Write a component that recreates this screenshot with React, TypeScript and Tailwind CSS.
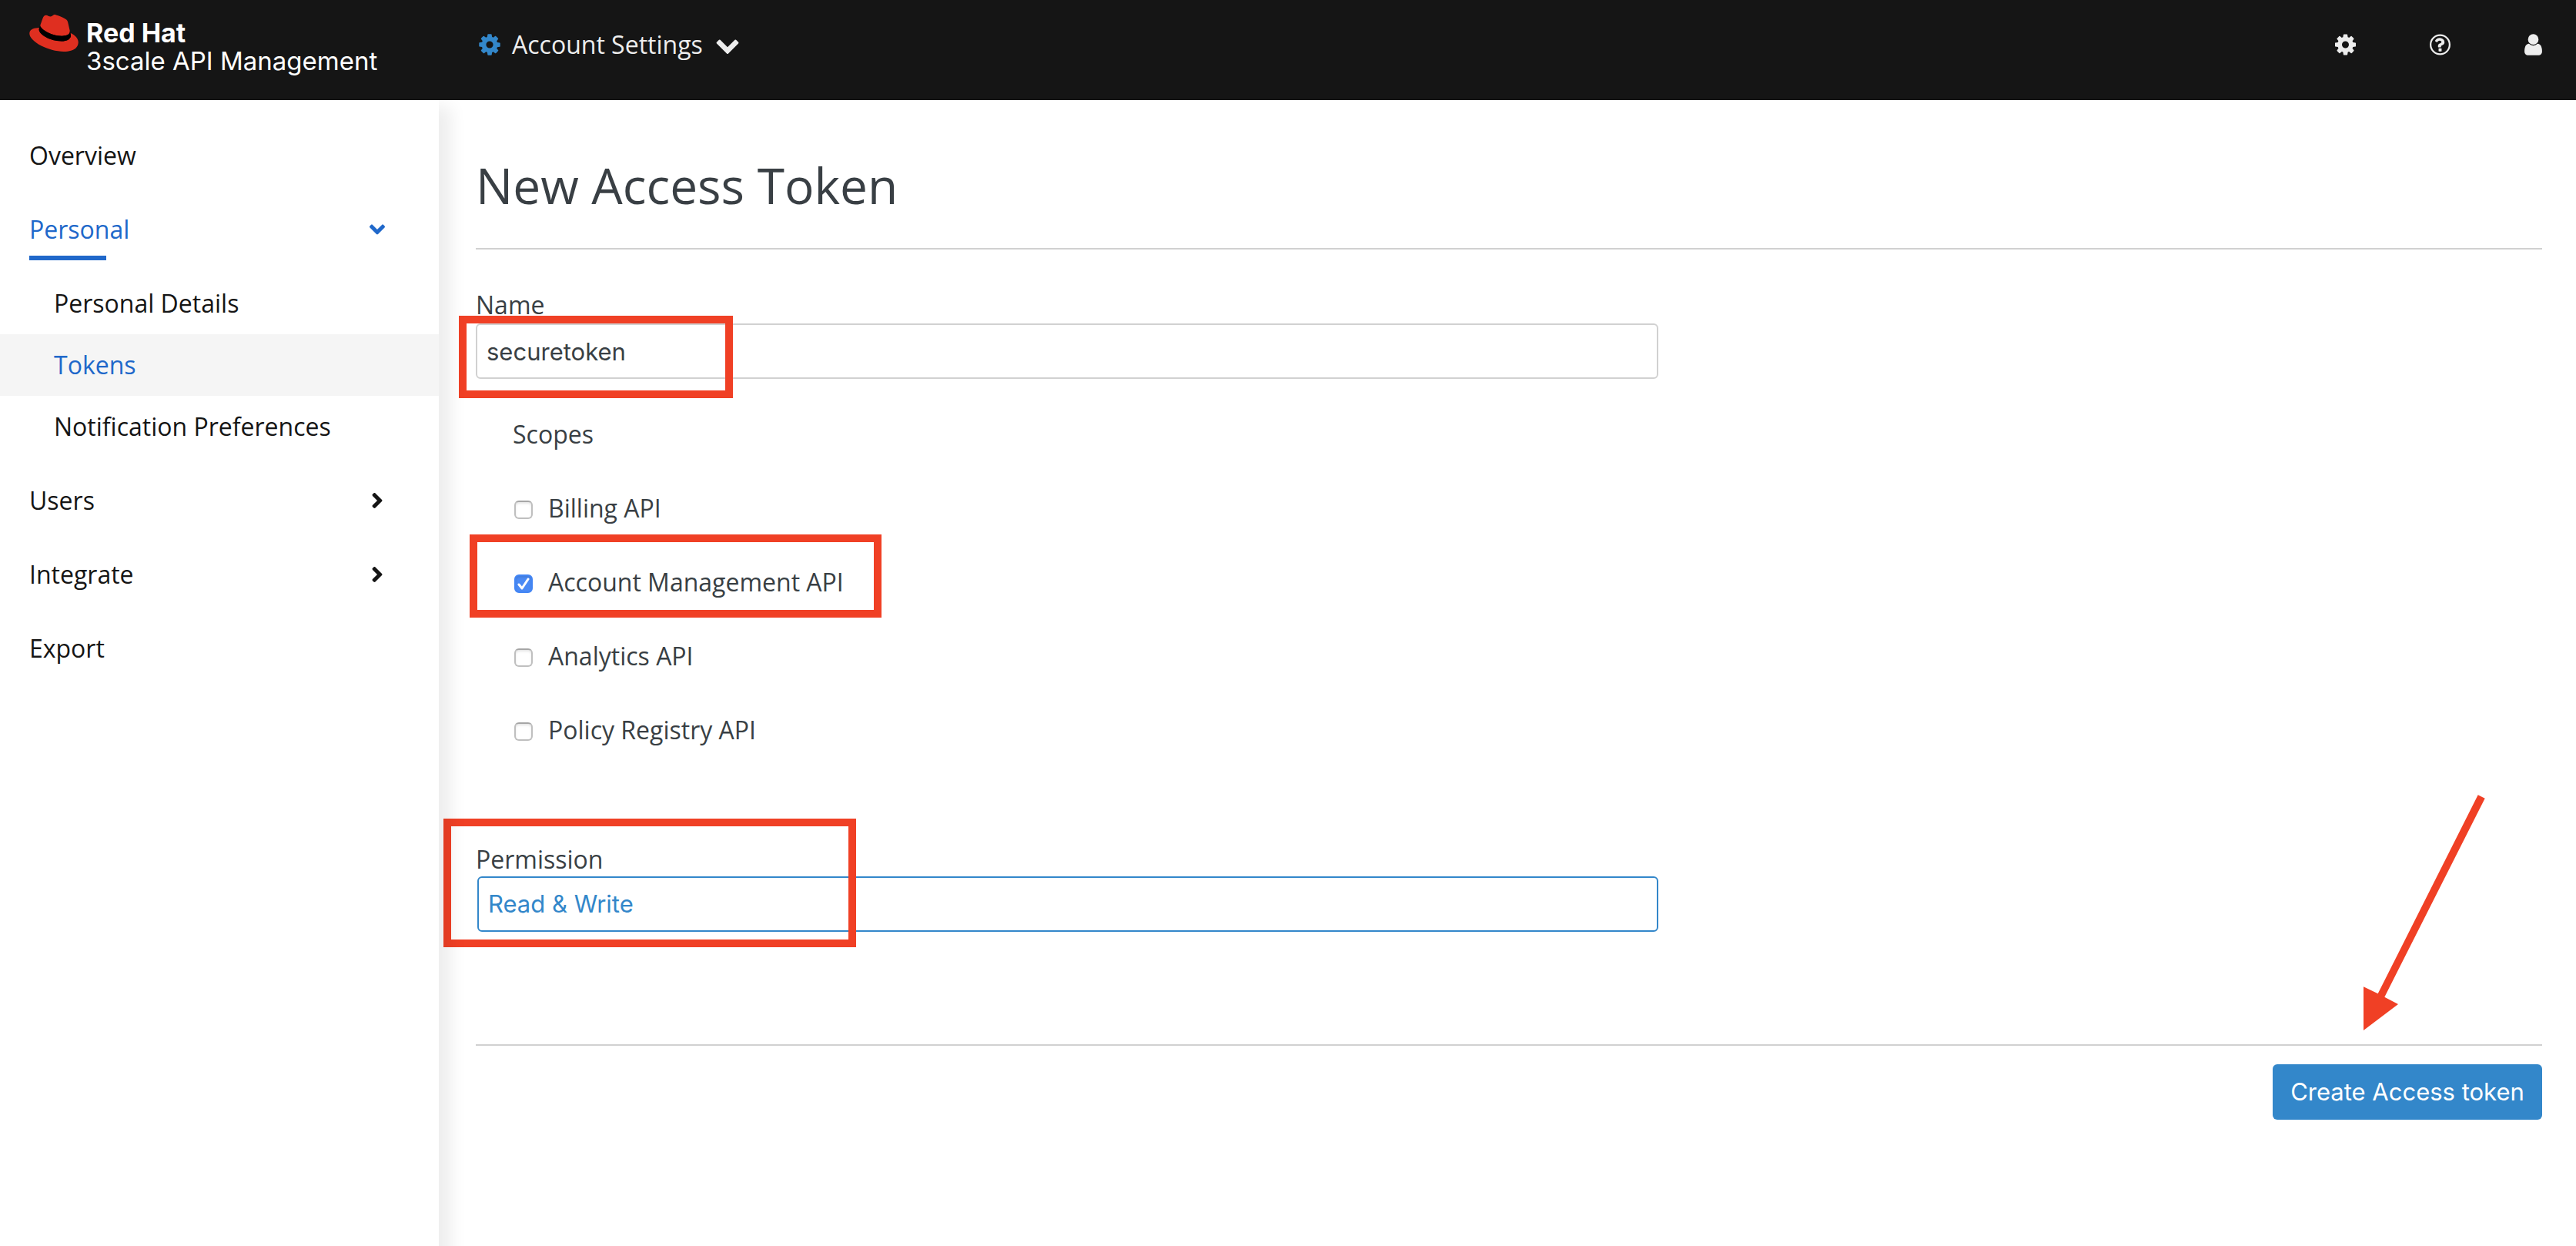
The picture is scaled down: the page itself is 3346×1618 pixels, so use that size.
import { useState } from "react";
import type { ReactNode } from "react";
import { FaAngleDown, FaAngleRight } from "react-icons/fa";

const GEAR =
  "M1152 896q0-106-75-181t-181-75-181 75-75 181 75 181 181 75 181-75 75-181zm512-109v222q0 12-8 23t-20 13l-185 28q-19 54-39 91 35 50 107 138 10 12 10 25t-9 23q-27 37-99 108t-94 71q-12 0-26-9l-138-108q-44 23-91 38-16 136-29 186-7 28-36 28h-222q-14 0-24.5-8.5t-11.5-21.5l-28-184q-49-16-90-37l-141 107q-10 9-25 9-14 0-25-11-126-114-165-168-7-10-7-23 0-12 8-23 15-21 51-66.5t54-70.5q-27-50-41-99l-183-27q-13-2-21-12.5t-8-23.5v-222q0-12 8-23t19-13l186-28q14-46 39-92-40-57-107-138-10-12-10-24 0-10 9-23 26-36 98.5-107.5t94.5-71.5q13 0 26 10l138 107q44-23 91-38 16-136 29-186 7-28 36-28h222q14 0 24.5 8.5t11.5 21.5l28 184q49 16 90 37l142-107q9-9 24-9 13 0 25 10 129 119 165 170 7 8 7 22 0 12-8 23-15 21-51 66.5t-54 70.5q26 50 41 98l183 28q13 2 21 12.5t8 23.5z";
const CHEVRON =
  "M1683 808l-742 741q-19 19-45 19t-45-19l-742-741q-19-19-19-45.5t19-45.5l166-165q19-19 45-19t45 19l531 531 531-531q19-19 45-19t45 19l166 165q19 19 19 45.5t-19 45.5z";
const QUESTION =
  "M1008 1200v160q0 14-9 23t-23 9h-160q-14 0-23-9t-9-23v-160q0-14 9-23t23-9h160q14 0 23 9t9 23zm213-496q0 50-15 90t-45.5 69-52 44-59.5 36q-32 18-46.5 28t-26 24-11.5 29v32q0 14-9 23t-23 9h-160q-14 0-23-9t-9-23v-68q0-35 10.5-64.5t24-47.5 39-35.5 41-25.5 44.5-21q53-25 75-43t22-49q0-42-43.5-71.5t-95.5-29.5q-56 0-95 27-29 20-80 83-9 12-25 12-11 0-19-6l-108-82q-10-7-12-20t5-23q122-192 349-192 129 0 238.5 89.5t109.5 214.5z";
const USER =
  "M1536 1399q0 109-62.5 187t-150.5 78h-854q-88 0-150.5-78t-62.5-187q0-85 8.5-160.5t31.5-152 58.5-131 94-89 134.5-34.5q131 128 313 128t313-128q76 0 134.5 34.5t94 89 58.5 131 31.5 152 8.5 160.5zm-256-887q0 159-112.5 271.5t-271.5 112.5-271.5-112.5-112.5-271.5 112.5-271.5 271.5-112.5 271.5 112.5 112.5 271.5z";

function Hat() {
  return (
    <svg viewBox="0.5 0.5 190.4 144" className="h-12 w-16 shrink-0" aria-hidden="true">
      <path
        fill="#df2f20"
        d="M127.47,83.49c12.51,0,30.61-2.58,30.61-17.46a14,14,0,0,0-.31-3.42l-7.45-32.36c-1.72-7.12-3.23-10.35-15.73-16.6C124.89,8.69,103.76.5,97.51.5,91.69.5,90,8,83.06,8c-6.68,0-11.64-5.6-17.89-5.6-6,0-9.91,4.09-12.93,12.5,0,0-8.41,23.72-9.49,27.16A6.43,6.43,0,0,0,42.53,44c0,9.22,36.3,39.45,84.94,39.45M160,72.07c1.73,8.19,1.73,9.05,1.73,10.13,0,14-15.74,21.77-36.43,21.77C78.54,104,37.58,76.6,37.58,58.49a18.45,18.45,0,0,1,1.51-7.33C22.27,52,.5,55,.5,74.22c0,31.48,74.59,70.28,133.65,70.28,45.28,0,56.7-20.48,56.7-36.65,0-12.72-11-27.16-30.83-35.78"
      />
      <path
        fill="#000"
        d="M160,72.07c1.73,8.19,1.73,9.05,1.73,10.13,0,14-15.74,21.77-36.43,21.77C78.54,104,37.58,76.6,37.58,58.49a18.45,18.45,0,0,1,1.51-7.33l3.66-9.06A6.43,6.43,0,0,0,42.53,44c0,9.22,36.3,39.45,84.94,39.45,12.51,0,30.61-2.58,30.61-17.46a14,14,0,0,0-.31-3.42Z"
      />
    </svg>
  );
}

function Header() {
  return (
    <header className="relative z-20 flex h-[130px] items-start bg-[#151515] text-[#ededed]">
      <a href="#home" className="flex w-[620px] shrink-0 items-start gap-[10px] pt-[19px] pl-[38px] text-white">
        <Hat />
        <span className="flex flex-col pt-[6px] font-['Inter',sans-serif] leading-9 whitespace-nowrap">
          <span className="text-[34px] font-bold">Red Hat</span>
          <span className="text-[33px]">3scale API Management</span>
        </span>
      </a>
      <button type="button" className="flex items-center gap-[13px] pt-[34px] leading-12 whitespace-nowrap">
        <svg viewBox="0 0 1792 1792" className="size-8 fill-[#3387ca]" aria-hidden="true">
          <path d={GEAR} />
        </svg>
        Account Settings
        <svg viewBox="0 0 1792 1792" className="ml-[3px] size-8 fill-current" aria-hidden="true">
          <path d={CHEVRON} />
        </svg>
      </button>
      <div className="ml-auto flex gap-24 pt-[42px] pr-[44px]">
        <button type="button" aria-label="Settings">
          <svg viewBox="128 0 1536 1792" className="h-8 w-[27px] fill-current">
            <path d={GEAR} />
          </svg>
        </button>
        <button type="button" aria-label="Help">
          <svg viewBox="128 0 1536 1792" className="h-8 w-[27px] fill-current">
            <circle cx="896" cy="896" r="704" fill="none" stroke="currentColor" strokeWidth="128" />
            <path d={QUESTION} />
          </svg>
        </button>
        <button type="button" aria-label="Account">
          <svg viewBox="256 0 1280 1792" className="h-8 w-[23px] fill-current">
            <path d={USER} />
          </svg>
        </button>
      </div>
    </header>
  );
}

function NavLink({ children, icon }: { children: ReactNode; icon?: ReactNode }) {
  return (
    <a href="#section" className="flex h-24 items-center justify-between pr-16 pl-[38px]">
      {children}
      {icon && <span className="flex w-8 justify-center">{icon}</span>}
    </a>
  );
}

function SubLink({ children, current }: { children: ReactNode; current?: boolean }) {
  return (
    <a
      href="#subsection"
      aria-current={current ? "page" : undefined}
      className={
        current
          ? "flex h-20 items-center bg-[#f5f5f5] pl-[70px] text-[#2068ca]"
          : "flex h-20 items-center pl-[70px]"
      }
    >
      {children}
    </a>
  );
}

function Sidebar() {
  return (
    <nav className="relative z-10 -mb-8 w-[570px] shrink-0 bg-white pt-6 text-[#151515] shadow-[24px_0_20px_-8px_rgba(3,3,3,0.07)]">
      <NavLink>Overview</NavLink>
      <button
        type="button"
        aria-expanded="true"
        className="relative flex h-24 w-full items-center justify-between pr-16 pl-[38px] text-[#2068ca]"
      >
        Personal
        <span className="flex w-8 justify-center">
          <FaAngleDown />
        </span>
        <span className="absolute bottom-2 left-[38px] h-1.5 w-[100px] bg-[#2068ca]" />
      </button>
      <div className="py-2">
        <SubLink>Personal Details</SubLink>
        <SubLink current>Tokens</SubLink>
        <SubLink>Notification Preferences</SubLink>
      </div>
      <NavLink icon={<FaAngleRight />}>Users</NavLink>
      <NavLink icon={<FaAngleRight />}>Integrate</NavLink>
      <NavLink>Export</NavLink>
    </nav>
  );
}

function Scope({ label, initial, children }: { label: string; initial?: boolean; children?: ReactNode }) {
  const [on, setOn] = useState(!!initial);
  return (
    <div className="relative">
      <label className="flex w-fit items-center gap-5 pl-0.5 leading-12">
        <span className="relative mt-1 flex size-6">
          <input
            type="checkbox"
            checked={on}
            onChange={(e) => setOn(e.target.checked)}
            className="size-6 appearance-none rounded-[6px] border-2 border-[#bfbfbf] border-t-[#a6a6a6] bg-white shadow-[inset_0_2px_3px_rgba(0,0,0,0.1)] checked:border-[#4285f4] checked:bg-[#4a8af5]"
          />
          {on && (
            <svg viewBox="0 0 24 24" className="pointer-events-none absolute inset-0 size-6" aria-hidden="true">
              <path d="M6 13l4 5 8-12" fill="none" stroke="#fff" strokeWidth="3" strokeLinecap="round" strokeLinejoin="round" />
            </svg>
          )}
        </span>
        {label}
      </label>
      {children}
    </div>
  );
}

function Form() {
  const [name, setName] = useState("securetoken");
  const [permission, setPermission] = useState("rw");
  return (
    <form onSubmit={(e) => e.preventDefault()}>
      <div className="relative mt-12 max-w-[1536px]">
        <label htmlFor="name" className="block leading-12">
          Name
        </label>
        <input
          id="name"
          type="text"
          value={name}
          onChange={(e) => setName(e.target.value)}
          className="block h-[72px] w-full rounded-[6px] border-2 border-[#d1d1d1] bg-white px-3 font-['Inter',sans-serif] text-[31px]"
        />
        <span className="pointer-events-none absolute -bottom-[25px] -left-[22px] h-[107px] w-[356px] border-[10px] border-[#f04025]" />
      </div>

      <fieldset className="mt-12 flex flex-col gap-12 pl-12">
        <legend className="contents">
          <span className="block leading-12">Scopes</span>
        </legend>
        <Scope label="Billing API" />
        <Scope label="Account Management API" initial>
          <span className="pointer-events-none absolute -top-[38px] -left-[56px] h-[108px] w-[535px] border-[10px] border-[#f04025]" />
        </Scope>
        <Scope label="Analytics API" />
        <Scope label="Policy Registry API" />
      </fieldset>

      <div className="relative mt-[122px] max-w-[1536px]">
        <label htmlFor="permission" className="block leading-11">
          Permission
        </label>
        <div className="pl-0.5">
          <select
            id="permission"
            value={permission}
            onChange={(e) => setPermission(e.target.value)}
            className="block h-[72px] w-full appearance-none rounded-[6px] border-2 border-[#3387ca] bg-white px-3 font-['Inter',sans-serif] text-[31px] text-[#3387ca]"
          >
            <option value="ro">Read Only</option>
            <option value="rw">Read &amp; Write</option>
          </select>
        </div>
        <span className="pointer-events-none absolute -bottom-5 -left-[42px] h-[167px] w-[536px] border-[10px] border-[#f04025]" />
      </div>

      <div className="mt-[146px] flex justify-end border-t-2 border-[#d1d1d1] pt-6">
        <div className="relative">
          <button
            type="submit"
            className="h-[72px] w-[350px] rounded-[6px] bg-[#3387ca] font-['Inter',sans-serif] text-[31px] whitespace-nowrap text-white"
          >
            Create Access token
          </button>
          <svg
            viewBox="0 0 158 306"
            className="pointer-events-none absolute right-[74px] bottom-full mb-11 h-[306px] w-[158px] fill-[#f04025]"
            aria-hidden="true"
          >
            <path d="M148.7 0.3L157.7 4.7L27.3 262.7L45 272L0 306V249.3L18.7 258.3Z" />
          </svg>
        </div>
      </div>
    </form>
  );
}

export default function App() {
  return (
    <div className="flex min-h-screen flex-col bg-white font-['Open_Sans',sans-serif] text-[32px] text-[#393f44]">
      <Header />
      <div className="flex grow overflow-hidden">
        <Sidebar />
        <main className="min-w-0 grow pt-[63px] pr-[44px] pb-16 pl-12">
          <h1 className="border-b-2 border-[#d1d1d1] pb-[33px] text-[64px] leading-24">New Access Token</h1>
          <Form />
        </main>
      </div>
    </div>
  );
}
